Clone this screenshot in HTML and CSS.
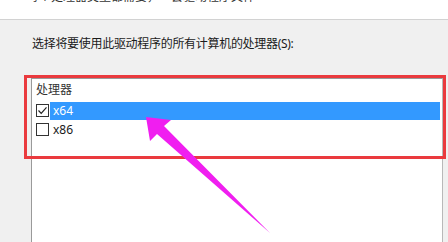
FILE: index.html
```html
<!DOCTYPE html>
<html lang="zh-CN">
<head>
<meta charset="utf-8">
<link rel="stylesheet" href="styles.css">
</head>
<body>
<div class="page">
  <div class="header">
    <div class="header-text">每个处理器类型都需要，一套驱动程序文件</div>
  </div>
  <div class="content">
    <div class="label">选择将要使用此驱动程序的所有计算机的处理器(S):</div>
    <div class="listbox">
      <div class="list-head">处理器</div>
      <div class="row selected-row">
        <span class="check">
          <svg width="13" height="13" viewBox="0 0 13 13"><rect x="0.5" y="0.5" width="12" height="12" fill="#fff" stroke="#333"/><path d="M2.5 6.5 L5.2 9.3 L10.5 3.3" fill="none" stroke="#222" stroke-width="1.2"/></svg>
        </span>
        <span class="item selected">x64</span>
      </div>
      <div class="row">
        <span class="check">
          <svg width="13" height="13" viewBox="0 0 13 13"><rect x="0.5" y="0.5" width="12" height="12" fill="#fff" stroke="#333"/></svg>
        </span>
        <span class="item">x86</span>
      </div>
    </div>
  </div>
  <div class="highlight"></div>
  <svg class="arrow" width="448" height="242" viewBox="0 0 448 242">
    <polygon points="146,117 150,141 157,134 270,233 164,126 171,120" fill="#f01ef0"/>
  </svg>
</div>
</body>
</html>
```
FILE: styles.css
```css
html, body {
  margin: 0;
  padding: 0;
}
body {
  width: 448px;
  height: 242px;
  overflow: hidden;
  background: #f0f0f0;
  font-family: "Noto Sans", "Noto Sans CJK SC", sans-serif;
  font-size: 12px;
  color: #1b1b1b;
}
.page {
  position: relative;
  width: 448px;
  height: 242px;
  overflow: hidden;
}
.header {
  height: 19px;
  background: #fff;
  border-bottom: 1px solid #d2d2d2;
  overflow: hidden;
}
.header-text {
  margin-top: -11px;
  padding-left: 27px;
  line-height: 16px;
  color: #333;
}
.content {
  padding-top: 16px;
}
.label {
  padding-left: 32px;
  line-height: 16px;
  letter-spacing: -0.3px;
}
.listbox {
  margin: 26px 5px 0 31px;
  height: 200px;
  background: #fff;
  border: 1px solid #9a9a9a;
  border-right-color: #b8b8b8;
}
.list-head {
  height: 22px;
  padding-top: 3px;
  box-sizing: border-box;
  padding-left: 4px;
  line-height: 16px;
  color: #333;
}
.row {
  display: flex;
  align-items: center;
  height: 19px;
  padding-left: 4px;
}
.check {
  display: flex;
  width: 13px;
  height: 13px;
  margin-right: 1px;
}
.item {
  line-height: 18px;
  padding-left: 3px;
}
.selected {
  flex: 1;
  margin-right: 2px;
  background: #3399ff;
  color: #fff;
}
.highlight {
  position: absolute;
  left: 24px;
  top: 75px;
  width: 422px;
  height: 84px;
  box-sizing: border-box;
  border: 3px solid #ea3a3e;
}
.arrow {
  position: absolute;
  left: 0;
  top: 0;
}
```
